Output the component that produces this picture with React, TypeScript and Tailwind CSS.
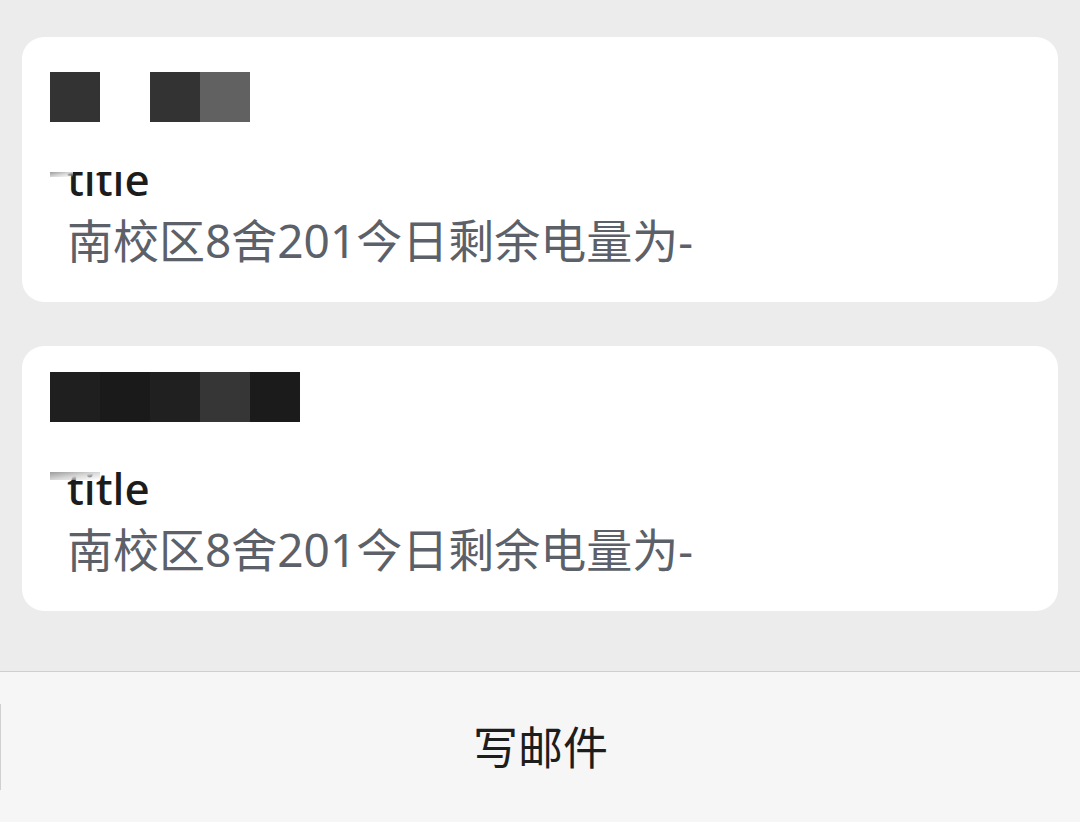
const cjk = "font-['Noto_Sans','Noto_Sans_CJK_SC',sans-serif]";

function Blocks({ colors }: { colors: string[] }) {
    return (
        <div className="flex">
            {colors.map((c, i) => (
                <div key={i} className="w-[50px] h-[50px]" style={{ backgroundColor: c }} />
            ))}
        </div>
    );
}

interface CardProps {
    blocks: string[];
    blockTop: string;
    coverTitle?: boolean;
}

function MailCard({ blocks, blockTop, coverTitle }: CardProps) {
    return (
        <div className="h-[265px] bg-white rounded-[22px] px-[28px] flex flex-col">
            <div className="h-[85px]">
                <div className={blockTop}>
                    <Blocks colors={blocks} />
                </div>
            </div>

            {/* title line - on the first card its top half is painted over */}
            <div className="relative mt-[35px] h-[44px]">
                <div className={`pl-[17px] text-[44px] leading-[44px] font-medium text-[#1c1c1c] ${cjk}`}>
                    title
                </div>
                {coverTitle && (
                    <div className="absolute left-0 right-0 top-0 h-[15px] bg-white" />
                )}
                <div
                    className={`absolute left-0 bg-gradient-to-br from-[#9c9c9c] via-[#d6d6d6] to-transparent ${
                        coverTitle ? "top-[15px] w-[23px] h-[5px]" : "top-[6px] w-[50px] h-[8px]"
                    }`}
                />
            </div>

            <div className={`mt-[16px] pl-[17px] text-[46px] leading-[46px] text-[#5c6169] ${cjk}`}>
                南校区8舍201今日剩余电量为-
            </div>
        </div>
    );
}

export default function App() {
    return (
        <div className="w-[1080px] h-[822px] bg-[#ececec] flex flex-col overflow-hidden">
            <div className="flex-1 px-[22px] pt-[37px] flex flex-col gap-[44px]">
                <MailCard
                    blocks={["#333333", "transparent", "#333333", "#616161"]}
                    blockTop="pt-[35px]"
                    coverTitle
                />
                <MailCard
                    blocks={["#1f1f1f", "#1a1a1a", "#202020", "#363636", "#1b1b1b"]}
                    blockTop="pt-[26px]"
                />
            </div>

            <div className="h-[151px] border-t border-[#cfcfcf] bg-[#f6f6f6] flex items-center">
                <div className="w-px h-[86px] bg-[#d0d0d0]" />
                <div className={`flex-1 text-center text-[45px] leading-[45px] text-[#1d1d1d] ${cjk}`}>
                    写邮件
                </div>
            </div>
        </div>
    );
}
